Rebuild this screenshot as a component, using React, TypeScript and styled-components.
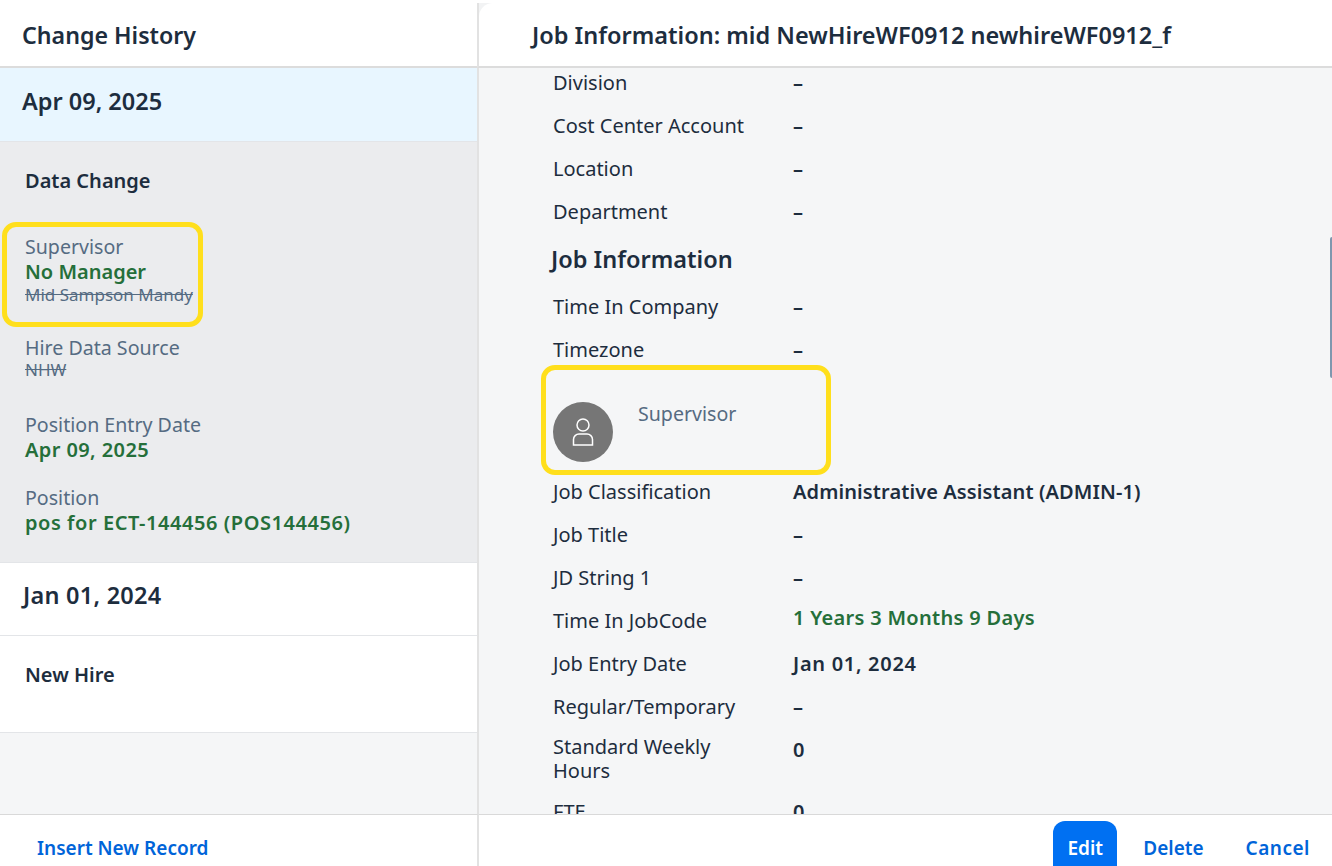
import React from 'react';
import styled, { createGlobalStyle } from 'styled-components';

const GlobalStyle = createGlobalStyle`
  html, body {
    margin: 0;
    height: 100%;
    overflow: hidden;
    background: #fff;
  }
  body {
    font-family: "Noto Sans", "Open Sans", "Liberation Sans", sans-serif;
    color: #1d2d3e;
  }
`;

const Dialog = styled.div`
  width: 1332px;
  height: 866px;
  display: grid;
  grid-template-columns: 479px 1fr;
  grid-template-rows: 68px 1fr 52px;
  overflow: hidden;
`;

const LeftHeader = styled.header`
  display: flex;
  align-items: center;
  padding: 3px 0 0 22px;
  background: #fff;
  border-bottom: 2px solid #dcdcdc;
  box-sizing: border-box;
`;

const RightHeaderShell = styled.div`
  margin: 3px 0 0 -2px;
  background: #f2f3f4;
  border-left: 2px solid #e2e2e2;
  border-bottom: 2px solid #dcdcdc;
`;

const RightHeader = styled.header`
  height: 100%;
  display: flex;
  align-items: center;
  padding-left: 53px;
  background: #fff;
  border-top-left-radius: 14px;
`;

const Title = styled.h1<{ $size?: number }>`
  margin: 0;
  font-size: ${p => p.$size ?? 23.5}px;
  line-height: 30px;
  font-weight: 600;
  color: #1d2d3e;
`;

const Sidebar = styled.aside`
  background: #f5f6f7;
  border-right: 2px solid #e2e2e2;
  overflow: hidden;
`;

const DateRow = styled.div<{ $selected?: boolean; $height: number }>`
  height: ${p => p.$height}px;
  box-sizing: border-box;
  display: flex;
  align-items: center;
  padding: 0 0 7px 22px;
  font-size: 23.5px;
  font-weight: 600;
  background: ${p => (p.$selected ? '#e8f6ff' : '#fff')};
  border-bottom: 1px solid #e3e5e8;
`;

const OlderDateRow = styled(DateRow)`
  padding: 0 0 8px 23px;
  letter-spacing: 0.25px;
`;

const ChangeBlock = styled.section`
  background: #ebecee;
  height: 421px;
  box-sizing: border-box;
  padding: 26px 0 0 25px;
  border-bottom: 1px solid #e3e5e8;
`;

const EventTitle = styled.div`
  font-size: 20px;
  line-height: 26px;
  font-weight: 600;
  color: #1d2d3e;
`;

const NewHireBlock = styled.section`
  background: #fff;
  height: 97px;
  box-sizing: border-box;
  padding: 26px 0 0 25px;
  border-bottom: 1px solid #e3e5e8;
`;

const Change = styled.div<{ $top: number }>`
  position: relative;
  margin-top: ${p => p.$top}px;
`;

const ChangeLabel = styled.div`
  font-size: 19.6px;
  line-height: 24px;
  color: #556b82;
`;

const NewValue = styled.div<{ $spacing?: number }>`
  font-size: 20px;
  line-height: 26px;
  font-weight: 600;
  color: #256f3a;
  letter-spacing: ${p => p.$spacing ?? 0}px;
`;

const OldValue = styled.div`
  font-size: 17px;
  line-height: 20px;
  color: #556b82;
  text-decoration: line-through;
`;

const Highlight = styled.div<{ $w: number; $h: number; $l: number; $t: number }>`
  position: absolute;
  left: ${p => p.$l}px;
  top: ${p => p.$t}px;
  width: ${p => p.$w}px;
  height: ${p => p.$h}px;
  box-sizing: border-box;
  border: 5px solid #ffdf1c;
  border-radius: 14px;
  pointer-events: none;
`;

const Content = styled.main`
  position: relative;
  background: #f5f6f7;
  overflow: hidden;
  padding-left: 74px;
`;

const ScrollBody = styled.div`
  margin-top: -7px;
`;

const ScrollThumb = styled.div`
  position: absolute;
  right: 0;
  top: 169px;
  width: 2px;
  height: 141px;
  background: #7f97ae;
  border-radius: 2px 0 0 2px;
`;

const Row = styled.div<{ $height?: number }>`
  display: grid;
  grid-template-columns: 240px 1fr;
  height: ${p => p.$height ?? 43}px;
  align-items: center;
`;

const Label = styled.div`
  font-size: 20px;
  line-height: 24px;
  color: #1d2d3e;
  max-width: 200px;
`;

const Value = styled.div<{ $green?: boolean; $lift?: number; $spacing?: number }>`
  font-size: 20px;
  line-height: 24px;
  font-weight: 600;
  color: ${p => (p.$green ? '#256f3a' : '#1d2d3e')};
  letter-spacing: ${p => p.$spacing ?? 0}px;
  transform: translateY(${p => p.$lift ?? 0}px);
`;

const SectionTitle = styled.h2`
  margin: 0 0 0 -2px;
  height: 52px;
  padding-bottom: 1px;
  box-sizing: border-box;
  display: flex;
  align-items: center;
  font-size: 23.5px;
  font-weight: 600;
  color: #1d2d3e;
`;

const SupervisorCard = styled.div`
  position: relative;
  height: 99px;
  display: flex;
  gap: 25px;
`;

const Avatar = styled.div`
  width: 60px;
  height: 60px;
  margin-top: 31px;
  border-radius: 50%;
  background: #767676;
  display: flex;
  align-items: center;
  justify-content: center;
`;

const SupervisorLabel = styled.div`
  margin-top: 31px;
  font-size: 19.6px;
  line-height: 24px;
  color: #556b82;
`;

const LeftFooter = styled.footer`
  display: flex;
  align-items: center;
  padding: 15px 0 0 37px;
  box-sizing: border-box;
  background: #fff;
  border-top: 1px solid #d9d9d9;
  border-right: 2px solid #e2e2e2;
`;

const RightFooter = styled.footer`
  display: flex;
  justify-content: flex-end;
  align-items: flex-start;
  padding: 6px 22px 0 0;
  gap: 42px;
  box-sizing: border-box;
  background: #fff;
  border-top: 1px solid #d9d9d9;
`;

const LinkButton = styled.button`
  border: 0;
  padding: 0;
  background: none;
  font: 600 19px/24px "Noto Sans", "Open Sans", sans-serif;
  color: #0064d9;
`;

const ActionLink = styled(LinkButton)`
  height: 54px;
`;

const CancelLink = styled(ActionLink)`
  letter-spacing: 0.5px;
`;

const PrimaryButton = styled(LinkButton)`
  width: 64px;
  height: 54px;
  margin-right: -16px;
  background: #0070f2;
  color: #fff;
  border-radius: 12px 12px 0 0;
`;

const topRows = ['Division', 'Cost Center Account', 'Location', 'Department'];
const jobRows = ['Time In Company', 'Timezone'];

export default function App() {
  return (
    <>
      <GlobalStyle />
      <Dialog>
        <LeftHeader>
          <Title $size={23.2}>Change History</Title>
        </LeftHeader>
        <RightHeaderShell>
          <RightHeader>
            <Title>Job Information: mid NewHireWF0912 newhireWF0912_f</Title>
          </RightHeader>
        </RightHeaderShell>

        <Sidebar>
          <DateRow $selected $height={74}>Apr 09, 2025</DateRow>
          <ChangeBlock>
            <EventTitle>Data Change</EventTitle>
            <Change $top={41}>
              <ChangeLabel>Supervisor</ChangeLabel>
              <NewValue>No Manager</NewValue>
              <OldValue>Mid Sampson Mandy</OldValue>
              <Highlight $l={-23} $t={-13} $w={201} $h={105} />
            </Change>
            <Change $top={31}>
              <ChangeLabel>Hire Data Source</ChangeLabel>
              <OldValue>NHW</OldValue>
            </Change>
            <Change $top={33}>
              <ChangeLabel>Position Entry Date</ChangeLabel>
              <NewValue $spacing={0.4}>Apr 09, 2025</NewValue>
            </Change>
            <Change $top={23}>
              <ChangeLabel>Position</ChangeLabel>
              <NewValue $spacing={0.55}>pos for ECT-144456 (POS144456)</NewValue>
            </Change>
          </ChangeBlock>
          <OlderDateRow $height={73}>Jan 01, 2024</OlderDateRow>
          <NewHireBlock>
            <EventTitle>New Hire</EventTitle>
          </NewHireBlock>
        </Sidebar>

        <Content>
          <ScrollBody>
            {topRows.map(label => (
              <Row key={label}>
                <Label>{label}</Label>
                <Value>–</Value>
              </Row>
            ))}
            <SectionTitle>Job Information</SectionTitle>
            {jobRows.map(label => (
              <Row key={label}>
                <Label>{label}</Label>
                <Value>–</Value>
              </Row>
            ))}
            <SupervisorCard>
              <Avatar>
                <svg width="24" height="28" viewBox="0 0 24 28" fill="none" stroke="#fff" strokeWidth="1.5">
                  <circle cx="12" cy="7" r="6" />
                  <path d="M2.500 27V21.500c0-3 2.500-5.500 5.500-5.500h8c3 0 5.500 2.500 5.500 5.500V27z" />
                </svg>
              </Avatar>
              <SupervisorLabel>Supervisor</SupervisorLabel>
              <Highlight $l={-12} $t={-6} $w={290} $h={110} />
            </SupervisorCard>
            <Row>
              <Label>Job Classification</Label>
              <Value $spacing={0.1}>Administrative Assistant (ADMIN-1)</Value>
            </Row>
            <Row>
              <Label>Job Title</Label>
              <Value>–</Value>
            </Row>
            <Row>
              <Label>JD String 1</Label>
              <Value>–</Value>
            </Row>
            <Row>
              <Label>Time In JobCode</Label>
              <Value $green $lift={-3} $spacing={0.3}>1 Years 3 Months 9 Days</Value>
            </Row>
            <Row>
              <Label>Job Entry Date</Label>
              <Value $spacing={0.7}>Jan 01, 2024</Value>
            </Row>
            <Row>
              <Label>Regular/Temporary</Label>
              <Value>–</Value>
            </Row>
            <Row $height={62}>
              <Label>Standard Weekly Hours</Label>
              <Value $lift={-9}>0</Value>
            </Row>
            <Row>
              <Label>FTE</Label>
              <Value>0</Value>
            </Row>
          </ScrollBody>
          <ScrollThumb />
        </Content>

        <LeftFooter>
          <LinkButton>Insert New Record</LinkButton>
        </LeftFooter>
        <RightFooter>
          <PrimaryButton>Edit</PrimaryButton>
          <ActionLink>Delete</ActionLink>
          <CancelLink>Cancel</CancelLink>
        </RightFooter>
      </Dialog>
    </>
  );
}
